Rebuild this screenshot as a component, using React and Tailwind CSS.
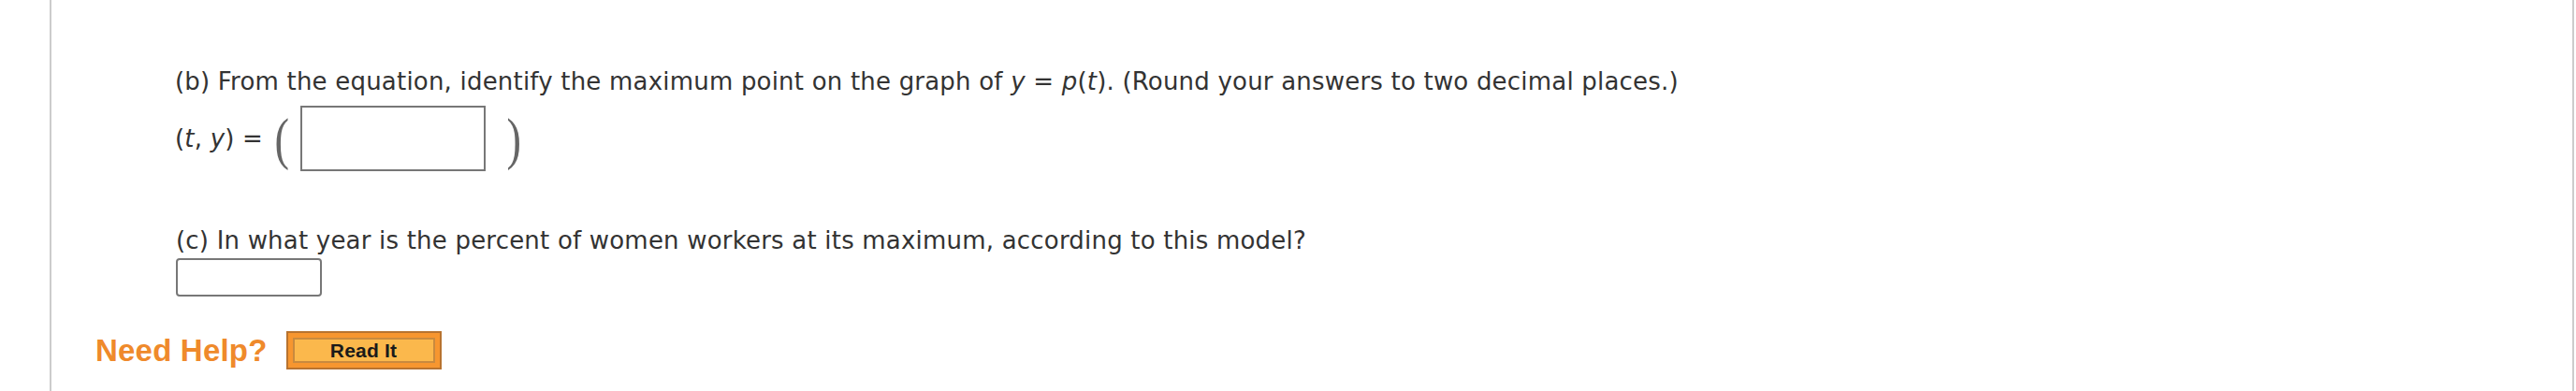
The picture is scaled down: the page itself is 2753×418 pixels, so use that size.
import React from 'react';

const Paren = ({ children }) => (
  <span className="text-[62px] leading-none text-[#666] font-['Liberation_Serif',serif] font-light scale-x-75 inline-block">
    {children}
  </span>
);

const App = () => {
  return (
    <div className="w-[2753px] h-[418px] bg-white">
      <div className="ml-[53px] w-[2698px] h-[418px] border-x-2 border-[#cccccc] font-['DejaVu_Sans',Verdana,sans-serif] text-[#333] text-[26px] tracking-[0.2px]">
        {/* part b */}
        <div className="pl-[132px] pt-[71px]">
          <p className="leading-[32px]">
            (b) From the equation, identify the maximum point on the graph of <i>y</i> = <i>p</i>(<i>t</i>). (Round your answers to two decimal places.)
          </p>
          <div className="mt-[10px] h-[70px] flex items-center">
            <span className="leading-[32px]">
              (<i>t</i>, <i>y</i>) =
            </span>
            <span className="ml-[10px]"><Paren>(</Paren></span>
            <input
              type="text"
              className="ml-[9px] w-[198px] h-[70px] border-2 border-[#777] bg-white outline-none"
            />
            <span className="ml-[20px]"><Paren>)</Paren></span>
          </div>
        </div>

        {/* part c */}
        <div className="pl-[133px] mt-[58px]">
          <p className="leading-[32px]">
            (c) In what year is the percent of women workers at its maximum, according to this model?
          </p>
          <input
            type="text"
            className="mt-[3px] block w-[156px] h-[41px] border-2 border-[#777] rounded-[4px] bg-white outline-none"
          />
        </div>

        {/* help */}
        <div className="pl-[47px] mt-[37px] flex items-center gap-[20px]">
          <span className="font-['Liberation_Sans',Arial,sans-serif] font-bold text-[33px] leading-none text-[#ef8a2b]">
            Need Help?
          </span>
          <button className="w-[166px] h-[41px] border-2 border-[#b8732f] bg-[#f7962f] p-[5px] flex">
            <span className="flex-1 flex items-center justify-center border-2 border-[#c98a3e] bg-[#fbb84c] font-['Liberation_Sans',Arial,sans-serif] font-bold text-[21px] leading-none text-[#1a1a1a]">
              Read It
            </span>
          </button>
        </div>
      </div>
    </div>
  );
};

export default App;
